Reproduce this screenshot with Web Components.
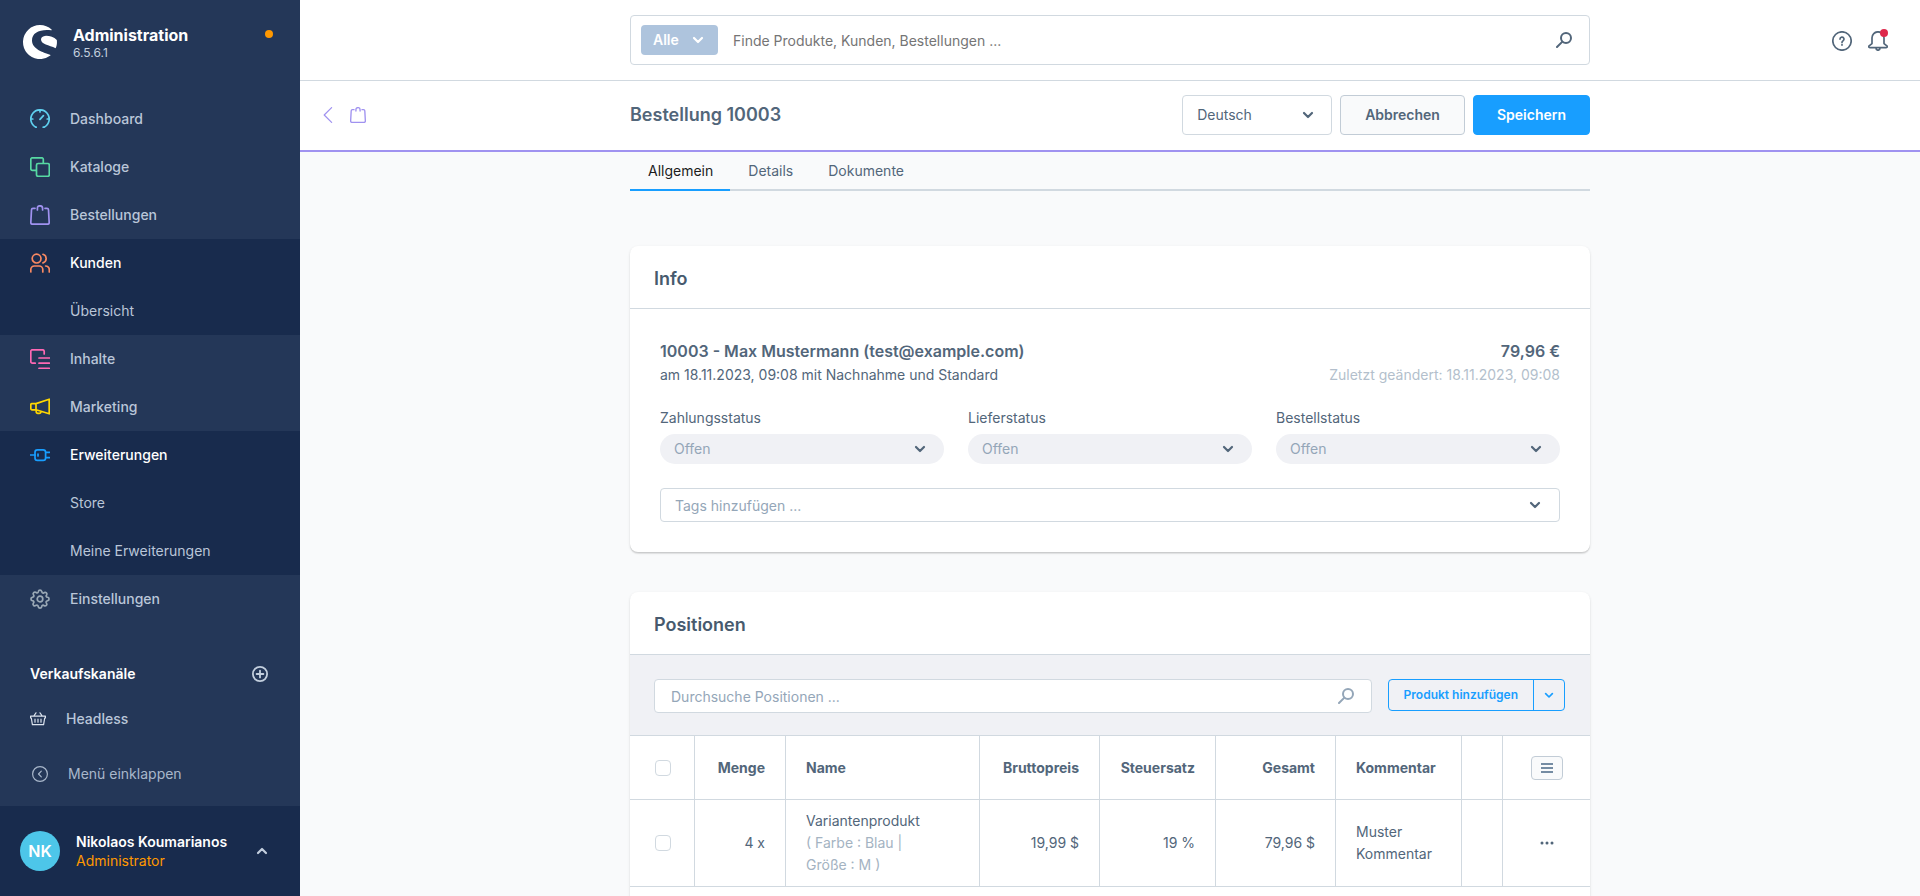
<!DOCTYPE html>
<html lang="de">
<head>
<meta charset="utf-8">
<title>Bestellung 10003 | Administration</title>
<style>
  html, body { margin: 0; height: 100%; }
  body {
    font-family: Inter, "Liberation Sans", sans-serif;
    font-size: 14px;
    line-height: 20px;
    color: #52667a;
    background: #f9fafb;
    -webkit-font-smoothing: antialiased;
    --line: #d1d9e0;
    --ink: #52667a;
    --muted: #94a6b8;
    --primary: #189eff;
    --module: #a092f0;
  }
</style>
</head>
<body>
<admin-app></admin-app>

<script>
const define = (name, html, setup) => {
  const template = document.createElement('template');
  template.innerHTML = '<style>*{box-sizing:border-box}button,input,select{font:inherit;color:inherit;margin:0}:host{display:block}</style>' + html;
  customElements.define(name, class extends HTMLElement {
    constructor() {
      super();
      this.attachShadow({ mode: 'open' }).append(template.content.cloneNode(true));
    }
    connectedCallback() { if (setup) setup(this, this.shadowRoot); }
  });
};

/* Icons: [viewBox, markup]; strokes follow the current text colour. */
const ICONS = {
  dashboard: ['0 0 20 20', '<path d="M6.2 18.2H5.8A9.2 9.2 0 1 1 14.2 18.2H13.2M10 1v2M1 10h1.8M17.2 10H19M10 10.4l3.4-3.7"/>'],
  catalog: ['0 0 20 20', '<path d="M6 13.3H2.4A1.6 1.6 0 0 1 .8 11.7V2.4A1.6 1.6 0 0 1 2.4.8h9.3a1.6 1.6 0 0 1 1.6 1.6V6"/><rect x="6.5" y="6.5" width="12.8" height="12.8" rx="1.6"/>'],
  bag: ['0 0 20 20', '<path d="M5 3.3H3Q1.6 3.3 1.5 4.7L.8 17.6Q.8 19.2 2.4 19.2H17.6Q19.2 19.2 19.2 17.6L18.5 4.7Q18.4 3.3 17 3.3H15M7.4 5V3.4Q7.4.8 10 .8T12.6 3.4V5"/>'],
  users: ['0 0 20 20', '<circle cx="6.6" cy="5.6" r="4.4"/><path d="M.8 19v-2.4a3.6 3.6 0 0 1 3.6-3.6h4.8a3.6 3.6 0 0 1 3.6 3.6V19M13 1.3a4.5 4.5 0 0 1 0 8.6M15.6 13a4 4 0 0 1 3.7 4v2"/>'],
  content: ['0 0 20 20', '<path d="M5.2 14.2H2.4A1.6 1.6 0 0 1 .8 12.6V2.4A1.6 1.6 0 0 1 2.4.8h10.2a1.6 1.6 0 0 1 1.6 1.6V5M9 9h10.4M9 14.2h10.4M9 19.3h10.4"/>'],
  megaphone: ['0 0 20 20', '<path d="M6 6.6 19.2 2.2V16.8L6 12.8H2A1.2 1.2 0 0 1 .8 11.6V7.8A1.2 1.2 0 0 1 2 6.6ZM6 6.6v6.2M6.2 13v1.6a1.8 1.8 0 0 0 1.8 1.8h1.2a1.8 1.8 0 0 0 1.8-1.8v-.3"/>'],
  plug: ['0 0 20 20', '<path d="M.5 10H5M16 7.3h3.6M16 12.7h3.6M8 9v2"/><rect x="5" y="4.8" width="10.6" height="10.6" rx="2.4"/>'],
  gear: ['0 0 20 20', '<circle cx="10" cy="10" r="2.8"/><path d="M8.3 2.4 A1.75 1.75 0 0 1 11.7 2.4 L12 3.2 A1.2 1.2 0 0 0 13.7 3.9 L14.4 3.5 A1.75 1.75 0 0 1 16.7 5.9 L16.2 6.6 A1.2 1.2 0 0 0 16.9 8.1 L17.7 8.3 A1.75 1.75 0 0 1 17.7 11.7 L16.9 12 A1.2 1.2 0 0 0 16.2 13.6 L16.6 14.3 A1.75 1.75 0 0 1 14.2 16.7 L13.5 16.2 A1.2 1.2 0 0 0 11.9 16.9 L11.7 17.7 A1.75 1.75 0 0 1 8.3 17.7 L8 16.9 A1.2 1.2 0 0 0 6.4 16.2 L5.7 16.6 A1.75 1.75 0 0 1 3.3 14.2 L3.8 13.5 A1.2 1.2 0 0 0 3.1 11.9 L2.3 11.7 A1.75 1.75 0 0 1 2.3 8.3 L3.1 8 A1.2 1.2 0 0 0 3.8 6.4 L3.4 5.7 A1.75 1.75 0 0 1 5.8 3.3 L6.5 3.8 A1.2 1.2 0 0 0 8.1 3.1 Z"/>'],
  plus: ['0 0 16 16', '<circle cx="8" cy="8" r="7.1"/><path d="M8 4.6v6.8M4.6 8h6.8"/>'],
  basket: ['0 0 16 14', '<path d="M.6 4.2H15.4V6H14.7L13.6 12.6H2.4L1.3 6H.6ZM3.8 4 6 .8M12.2 4 10 .8M5 7.2v3M8 7.2v3M11 7.2v3"/>'],
  collapse: ['0 0 16 16', '<circle cx="8" cy="8" r="7.4"/><path d="M9.3 5.2 6.5 8l2.8 2.8"/>'],
  down: ['0 0 12 8', '<path d="M2 2 6 6l4-4"/>'],
  up: ['0 0 12 8', '<path d="M2 6 6 2l4 4"/>'],
  search: ['0 0 16 16', '<circle cx="10" cy="6" r="5"/><path d="M6.4 9.6 1 15"/>'],
  back: ['0 0 10 16', '<path d="M8.6.6 1.2 8l7.4 7.4"/>'],
  help: ['0 0 20 20', '<circle cx="10" cy="10" r="9.2"/><path d="M8 8.1a2 2 0 1 1 2.9 1.8q-.9.5-.9 1.6M10 13.5v.6"/>'],
  bell: ['0 0 20 20', '<path d="M4 12.6V6.8a6 6 0 0 1 12 0V12.6L19.2 15.2Q19.4 16.6 18 16.6H2Q.6 16.6 .8 15.2ZM8 17a2 2.2 0 0 0 4 0"/>'],
  list: ['0 0 12 10', '<path d="M0 1h12M0 5h12M0 9h12"/>'],
  dots: ['0 0 14 4', '<path d="M2 2h.01M7 2h.01M12 2h.01"/>'],
  logo: ['0 0 34 34', '<path fill="currentColor" stroke="none" d="M28.6 4.6A17 17 0 1 0 27 30.8Q28 30.2 27 29.8C20 27 9 24 9 15.4 9 7.6 17 4 28.2 5.3Q29 5.2 28.6 4.6ZM33.8 15C31 12 27 10.8 23 10.8Q18 11.2 18 14.6C18 19.4 26 20.2 32.6 23.2 33.8 21 34.2 18 33.8 15Z"/>']
};
define('ui-icon', `<style>
  :host { display: inline-flex; flex: none; }
  svg { display: block; fill: none; stroke: currentColor; stroke-linecap: round; stroke-linejoin: round; }
</style><svg aria-hidden="true"></svg>`, (el, root) => {
  const [box, markup] = ICONS[el.getAttribute('name')];
  const [, , w, h] = box.split(' ').map(Number);
  const svg = root.querySelector('svg');
  const width = Number(el.getAttribute('size') || w);
  svg.setAttribute('viewBox', box);
  svg.setAttribute('width', width);
  svg.setAttribute('height', width * h / w);
  svg.setAttribute('stroke-width', el.getAttribute('stroke') || 1.7);
  svg.innerHTML = markup;
});

/* Sidebar */
define('nav-item', `<style>
  a { display: flex; align-items: center; gap: 20px; height: 48px; padding: 0 30px; color: #bac6d8; text-decoration: none; }
  .icon { display: flex; width: 20px; color: var(--tint); }
  :host([icon]) a { font-weight: 500; }
  :host([dark]) { background: #182b4d; }
  :host([active]) a { color: #fff; }
</style><a href="#"><span class="icon"></span><slot></slot></a>`, (el, root) => {
  if (!el.hasAttribute('icon')) return;
  const icon = document.createElement('ui-icon');
  icon.setAttribute('name', el.getAttribute('icon'));
  root.querySelector('.icon').replaceChildren(icon);
  el.style.setProperty('--tint', el.getAttribute('tint'));
});

define('user-bar', `<style>
  :host { background: #182b4d; }
  button { display: flex; align-items: center; width: 100%; height: 90px; padding: 0 32px 0 20px; border: 0; background: none; text-align: left; color: #fff; }
  .avatar { display: grid; place-items: center; width: 40px; height: 40px; border-radius: 50%; background: #4dc6e9; font-size: 16px; font-weight: 600; margin-right: 16px; }
  .who { flex: 1; font-weight: 600; line-height: 19px; }
  .role { display: block; color: #ff9800; font-weight: 400; }
  ui-icon { color: #c3cfde; }
</style>
<button><span class="avatar">NK</span><span class="who">Nikolaos Koumarianos<span class="role">Administrator</span></span><ui-icon name="up" stroke="2.2"></ui-icon></button>`);

define('side-bar', `<style>
  :host { display: flex; flex-direction: column; width: 300px; flex: none; background: #243758; color: #bac6d8; }
  header { display: flex; align-items: flex-start; padding: 25px 27px 0 23px; height: 95px; flex: none; }
  header ui-icon { color: #fff; }
  .brand { flex: 1; margin-left: 16px; font-size: 12px; line-height: 16px; color: #c3cfde; }
  strong { display: block; font-size: 16px; line-height: 20px; font-weight: 700; color: #fff; }
  .dot { width: 8px; height: 8px; border-radius: 50%; background: #ff9800; margin-top: 5px; }
  nav { flex: 1; }
  .channels { display: flex; align-items: center; justify-content: space-between; margin-top: 40px; height: 22px; padding: 0 32px 0 30px; color: #fff; font-weight: 600; }
  .channels button { display: flex; padding: 0; border: 0; background: none; color: #c3cfde; }
  .row { display: flex; align-items: center; color: #bac6d8; text-decoration: none; padding: 0 30px; }
  .channel { height: 48px; margin-top: 10px; gap: 20px; font-weight: 500; }
  .channel ui-icon { color: #dbe3ee; }
  .collapse { height: 40px; margin-top: 11px; padding-left: 32px; gap: 20px; border: 0; background: none; color: #a9b7cb; }
</style>
<header><ui-icon name="logo"></ui-icon><div class="brand"><strong>Administration</strong>6.5.6.1</div><span class="dot"></span></header>
<nav>
  <nav-item icon="dashboard" tint="#5fcfee">Dashboard</nav-item>
  <nav-item icon="catalog" tint="#57d9a3">Kataloge</nav-item>
  <nav-item icon="bag" tint="#a092f0">Bestellungen</nav-item>
  <nav-item icon="users" tint="#f88962" dark active>Kunden</nav-item>
  <nav-item dark>Übersicht</nav-item>
  <nav-item icon="content" tint="#ff68b4">Inhalte</nav-item>
  <nav-item icon="megaphone" tint="#ffd700">Marketing</nav-item>
  <nav-item icon="plug" tint="#189eff" dark active>Erweiterungen</nav-item>
  <nav-item dark>Store</nav-item>
  <nav-item dark>Meine Erweiterungen</nav-item>
  <nav-item icon="gear" tint="#9aa8b5">Einstellungen</nav-item>
  <div class="channels">Verkaufskanäle<button aria-label="Verkaufskanal hinzufügen"><ui-icon name="plus" stroke="1.8"></ui-icon></button></div>
  <a class="row channel" href="#"><ui-icon name="basket" stroke="1.2"></ui-icon>Headless</a>
  <button class="row collapse"><ui-icon name="collapse" stroke="1.2"></ui-icon>Menü einklappen</button>
</nav>
<user-bar></user-bar>`);

/* Global search and page header share a side / 960px / side grid. */
define('search-header', `<style>
  :host { display: grid; grid-template-columns: 1fr minmax(0, 960px) 1fr; align-items: center; height: 81px; background: #fff; border-bottom: 1px solid var(--line); }
  .search { grid-column: 2; display: flex; align-items: center; height: 50px; padding: 0 17px 0 10px; border: 1px solid var(--line); border-radius: 4px; }
  .scope { display: flex; align-items: center; justify-content: space-between; width: 77px; height: 30px; padding: 0 14px 0 12px; border: 0; border-radius: 4px; background: #aec4dd; color: #fff; font-weight: 600; }
  input { flex: 1; min-width: 0; margin-left: 15px; padding: 2px 0 0; border: 0; outline: 0; background: none; }
  input::placeholder { color: #757575; opacity: 1; }
  .side { display: flex; justify-content: flex-end; gap: 16px; padding: 2px 32px 0 0; }
  .side button { position: relative; display: flex; padding: 0; border: 0; background: none; }
  .badge { position: absolute; top: -2px; right: 0; width: 8px; height: 8px; border-radius: 50%; background: #de294c; }
</style>
<div class="search"><button class="scope">Alle<ui-icon name="down" stroke="2.2"></ui-icon></button>
<input type="search" aria-label="Suche" placeholder="Finde Produkte, Kunden, Bestellungen ..."><ui-icon name="search" stroke="2"></ui-icon></div>
<div class="side"><button aria-label="Hilfe"><ui-icon name="help"></ui-icon></button><button aria-label="Benachrichtigungen"><ui-icon name="bell"></ui-icon><span class="badge"></span></button></div>`);

define('ui-select', `<style>
  :host { display: block; color: var(--ink); }
  label { display: block; line-height: 20px; margin-bottom: 6px; }
  label:empty { display: none; }
  .field { display: grid; align-items: center; }
  select, ui-icon { grid-area: 1 / 1; }
  ui-icon { justify-self: end; pointer-events: none; margin-right: var(--chevron, 18px); }
  select { appearance: none; width: 100%; height: var(--height, 40px); padding: 0 40px 0 14px; border: 1px solid var(--line); border-radius: 4px; background: #fff; outline: 0; }
  :host([pill]) select { border: 0; border-radius: 15px; background: #f0f1f5; color: var(--muted); }
  :host([hint]) select { padding-top: 2px; color: var(--muted); }
</style>
<label for="s"></label><div class="field"><select id="s"><option></option></select><ui-icon name="down" stroke="2.2"></ui-icon></div>`, (el, root) => {
  root.querySelector('label').textContent = el.getAttribute('label') || '';
  root.querySelector('option').textContent = el.getAttribute('value');
  if (!el.hasAttribute('label')) root.querySelector('select').setAttribute('aria-label', el.getAttribute('name'));
});

define('page-header', `<style>
  :host { display: grid; grid-template-columns: 1fr minmax(0, 960px) 1fr; align-items: start; height: 71px; padding-top: 14px; background: #fff; border-bottom: 2px solid var(--module); }
  .back { display: flex; align-items: center; gap: 17px; height: 40px; padding-left: 23px; color: var(--module); }
  .back a { display: flex; color: inherit; }
  .bar { display: flex; align-items: center; gap: 8px; }
  h1 { flex: 1; margin: 0; font-size: 18px; line-height: 24px; font-weight: 600; }
  ui-select { width: 150px; }
  button { height: 40px; padding: 0 24px; border: 1px solid #c2ccd6; border-radius: 4px; background: #f9fafb; font-weight: 600; }
  .primary { padding: 0 23px; border-color: var(--primary); background: var(--primary); color: #fff; }
</style>
<div class="back"><a href="#" aria-label="Zurück"><ui-icon name="back" stroke="1.2"></ui-icon></a><ui-icon name="bag" size="16"></ui-icon></div>
<div class="bar"><h1>Bestellung 10003</h1><ui-select name="Sprache" value="Deutsch"></ui-select><button>Abbrechen</button><button class="primary">Speichern</button></div>`);

define('page-tabs', `<style>
  :host { display: flex; height: 39px; border-bottom: 2px solid var(--line); }
  a { height: 39px; padding: 0 17px 0 18px; line-height: 38px; color: var(--ink); text-decoration: none; }
  .active { color: #1c1c1c; border-bottom: 2px solid var(--primary); }
</style>
<a href="#" class="active">Allgemein</a><a href="#">Details</a><a href="#">Dokumente</a>`);

define('ui-card', `<style>
  :host { background: #fff; border-radius: 8px; box-shadow: 0 1px 1px rgba(0,0,0,.08), 0 2px 1px rgba(0,0,0,.06), 0 1px 3px rgba(0,0,0,.1); }
  h2 { margin: 0; height: 63px; padding: 0 24px; line-height: 66px; font-size: 18px; font-weight: 600; color: #475a6e; border-bottom: 1px solid var(--line); }
</style><h2></h2><slot></slot>`, (el, root) => { root.querySelector('h2').textContent = el.getAttribute('heading'); });

define('order-info', `<style>
  :host { padding: 30px; }
  .line { display: flex; justify-content: space-between; line-height: 24px; }
  .big { font-size: 16px; font-weight: 600; }
  .changed { color: #b3bfcc; }
  .states { display: grid; grid-template-columns: repeat(3, 1fr); gap: 24px; margin: 21px 0 24px; }
  .states ui-select { --height: 30px; }
  .tags { --height: 34px; --chevron: 19px; }
</style>
<div class="line big"><span>10003 - Max Mustermann (test@example.com)</span><span>79,96 €</span></div>
<div class="line"><span>am 18.11.2023, 09:08 mit Nachnahme und Standard</span><span class="changed">Zuletzt geändert: 18.11.2023, 09:08</span></div>
<div class="states"><ui-select pill label="Zahlungsstatus" value="Offen"></ui-select><ui-select pill label="Lieferstatus" value="Offen"></ui-select><ui-select pill label="Bestellstatus" value="Offen"></ui-select></div>
<ui-select class="tags" hint name="Tags" value="Tags hinzufügen ..."></ui-select>`);

define('positions-toolbar', `<style>
  :host { display: flex; gap: 16px; height: 80px; padding: 24px 25px 0 24px; background: #f0f1f5; }
  .search { flex: 1; display: flex; align-items: center; height: 34px; padding: 0 17px 0 16px; border: 1px solid var(--line); border-radius: 4px; background: #fff; color: var(--muted); }
  input { flex: 1; min-width: 0; padding: 2px 0 0; border: 0; outline: 0; background: none; }
  input::placeholder { color: var(--muted); opacity: 1; }
  .split { display: flex; height: 32px; border: 1px solid var(--primary); border-radius: 4px; color: var(--primary); }
  button { display: flex; align-items: center; padding: 0 15px; border: 0; background: none; font-size: 12px; font-weight: 600; }
  button + button { padding: 0 10px; border-left: 1px solid var(--primary); }
</style>
<div class="search"><input type="search" aria-label="Durchsuche Positionen" placeholder="Durchsuche Positionen ..."><ui-icon name="search" stroke="2"></ui-icon></div>
<div class="split"><button>Produkt hinzufügen</button><button aria-label="Weitere Optionen"><ui-icon name="down" size="10" stroke="2"></ui-icon></button></div>`);

define('positions-table', `<style>
  :host { min-height: 200px; }
  table { width: 100%; table-layout: fixed; border-collapse: separate; border-spacing: 0; line-height: 22px; border-top: 1px solid var(--line); }
  th, td { padding: 10px 20px; border-right: 1px solid var(--line); border-bottom: 1px solid var(--line); text-align: left; font-weight: 400; }
  th { height: 64px; font-weight: 700; white-space: nowrap; }
  th:last-child, td:last-child { border-right: 0; text-align: center; padding: 0; }
  th:first-child, td:first-child { padding: 0 0 0 25px; }
  .num { text-align: right; }
  .options { color: #a4b3c2; }
  input { appearance: none; display: block; width: 16px; height: 16px; border: 1px solid var(--line); border-radius: 4px; background: #fff; }
  button { display: inline-flex; align-items: center; justify-content: center; vertical-align: middle; width: 32px; height: 24px; padding: 0; border: 1px solid #c2ccd6; border-radius: 4px; background: #f9fafb; color: #758ca3; }
  td button { border: 0; background: none; color: var(--ink); }
</style>
<table>
<colgroup><col style="width:65px"><col style="width:91px"><col><col style="width:120px"><col style="width:116px"><col style="width:120px"><col style="width:126px"><col style="width:41px"><col style="width:87px"></colgroup>
<thead><tr><th><input type="checkbox" aria-label="Alle auswählen"></th><th class="num">Menge</th><th>Name</th><th class="num">Bruttopreis</th><th class="num">Steuersatz</th><th class="num">Gesamt</th><th>Kommentar</th><th></th><th><button aria-label="Spalten"><ui-icon name="list" stroke="1.8"></ui-icon></button></th></tr></thead>
<tbody><tr><td><input type="checkbox" aria-label="Variantenprodukt auswählen"></td><td class="num">4 x</td><td>Variantenprodukt<br><span class="options">( Farbe : Blau |<br>Größe : M )</span></td><td class="num">19,99 $</td><td class="num">19 %</td><td class="num">79,96 $</td><td>Muster Kommentar</td><td></td><td><button aria-label="Aktionen"><ui-icon name="dots" stroke="3"></ui-icon></button></td></tr></tbody>
</table>`);

define('admin-app', `<style>
  :host { display: flex; height: 100vh; overflow: hidden; }
  main { flex: 1; min-width: 0; display: flex; flex-direction: column; }
  search-header, page-header { flex: none; }
  .view { flex: 1; overflow: hidden; }
  .content { max-width: 960px; margin: 0 auto; }
  ui-card { margin-bottom: 40px; }
  page-tabs { margin-bottom: 55px; }
</style>
<side-bar></side-bar>
<main><search-header></search-header><page-header></page-header>
<div class="view"><div class="content"><page-tabs></page-tabs>
<ui-card heading="Info"><order-info></order-info></ui-card>
<ui-card heading="Positionen"><positions-toolbar></positions-toolbar><positions-table></positions-table></ui-card>
</div></div></main>`);
</script>
</body>
</html>
